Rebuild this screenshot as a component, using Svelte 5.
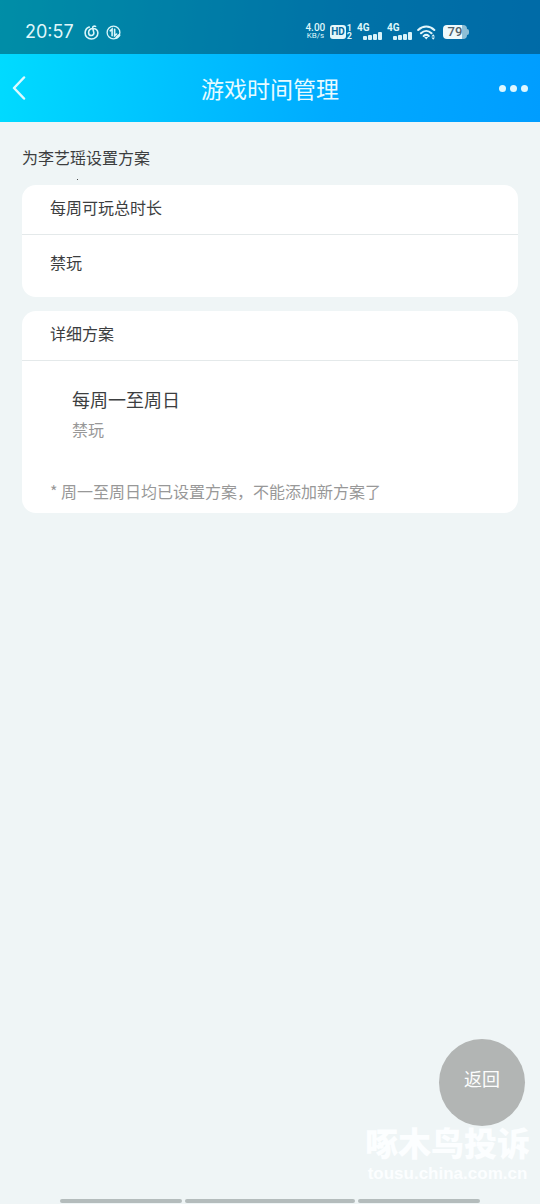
<script>
  const user = '李艺瑶';
  const total = '禁玩';
  const plans = [{ days: '每周一至周日', rule: '禁玩' }];
  const signals = ['4G', '4G'];
</script>

<div class="screen">
  <div class="top">
    <div class="status">
      <div class="left">
        <span class="clock">20:57</span>
        <svg class="ico" viewBox="0 0 16 16" fill="none" stroke="#d9f6fa" stroke-width="1.7" stroke-linecap="round">
          <path d="M5.600 2.200C3 3.200 1.200 5.600 1.200 8.500c0 3.700 2.900 6.400 6.700 6.400s6.900-2.800 6.900-6.300c0-3-2.300-4.900-5.300-4.900-2.700 0-4.600 1.800-4.600 4.200 0 1.900 1.300 3.300 3 3.300 1.800 0 2.900-1.500 2.500-3.300L9.300 3.400C9 1.700 10.500.6 12.300 1.500" />
        </svg>
        <svg class="ico" viewBox="0 0 16 16" fill="none" stroke="#d9f6fa" stroke-width="1.4" stroke-linecap="round">
          <circle cx="8" cy="8" r="6.800" />
          <path d="M4.500 6.200 6.500 4.300V11.500M9.200 4.500V11.500L11.300 9.600" stroke-width="1.700" />
          <path d="M11.300 13.300 14 11" stroke-width="2.800" />
        </svg>
      </div>
      <div class="right">
        <div class="speed"><b>4.00</b><span>KB/s</span></div>
        <div class="volte">
          <span class="hd">HD</span>
          <span class="sims"><b>1</b><b>2</b></span>
        </div>
        {#each signals as label}
          <div class="signal">
            <b>{label}</b>
            <svg viewBox="0 0 19 8" fill="#d9f3fa">
              <rect x="0" y="4" width="4" height="4" rx="1" />
              <rect x="5" y="3" width="4" height="5" rx="1" />
              <rect x="10" y="2" width="4" height="6" rx="1" />
              <rect x="15" y="0" width="4" height="8" rx="1" />
            </svg>
          </div>
        {/each}
        <svg class="wifi" viewBox="0 0 19 15" fill="none" stroke="#e2f6fb" stroke-width="2.100" stroke-linecap="round">
          <path d="M1.200 5C6 .4 12.500.4 17.300 5M4 8.200c3.200-3 7.300-3 10.500 0M6.700 11c1.600-1.400 3.500-1.400 5 0" />
          <path d="M7.200 12h4L9.200 14.500z" fill="#e2f6fb" stroke="none" />
          <path d="M14.400 11.400 16.200 9.200l1.800 2.200zM14.400 12.600h3.600l-1.800 2.200z" fill="#e2f6fb" stroke="none" />
        </svg>
        <div class="battery"><span>79</span></div>
      </div>
    </div>
    <header>
      <button class="back" aria-label="返回上一页">
        <svg viewBox="0 0 14 24" fill="none" stroke="#dcfaff" stroke-width="2.500" stroke-linecap="round" stroke-linejoin="round">
          <path d="M12 1.500 2 12l10 10.500" />
        </svg>
      </button>
      <h1>游戏时间管理</h1>
      <button class="more" aria-label="更多">
        <i></i><i></i><i></i>
      </button>
    </header>
  </div>

  <main>
    <p class="intro">为{user}设置方案</p>
    <div class="speck"></div>

    <section class="card">
      <h2>每周可玩总时长</h2>
      <p class="total">{total}</p>
    </section>

    <section class="card">
      <h2>详细方案</h2>
      {#each plans as plan}
        <div class="plan">
          <h3>{plan.days}</h3>
          <p>{plan.rule}</p>
        </div>
      {/each}
      <p class="hint">* 周一至周日均已设置方案，不能添加新方案了</p>
    </section>
  </main>

  <button class="return">返回</button>
  <div class="mark">
    <strong>啄木鸟投诉</strong>
    <span>tousu.china.com.cn</span>
  </div>
  <div class="navline"><i></i><i></i><i></i></div>
</div>

<style>
  :global(body) {
    background: #eff5f6;
  }
  .screen {
    position: relative;
    display: flex;
    flex-direction: column;
    min-height: 100vh;
    overflow: hidden;
    color: #3c3e3f;
    background: #eff5f6;
    font-family: 'Noto Sans CJK SC', sans-serif;
  }
  h1, h2, h3, p {
    margin: 0;
    font-weight: 400;
  }
  button {
    padding: 0;
    border: 0;
    background: none;
    font-family: inherit;
  }
  svg {
    display: block;
  }
  .top {
    background: linear-gradient(97deg, #00dcff 0%, #00c2ff 32%, #00abff 62%, #009dff 100%);
  }
  .status {
    display: flex;
    align-items: center;
    justify-content: space-between;
    height: 54px;
    padding: 10px 73px 0 25px;
    box-sizing: border-box;
    background: rgba(0, 40, 50, 0.43);
    color: #dff6fa;
    font-family: Roboto, sans-serif;
  }
  .left, .right {
    display: flex;
    align-items: center;
  }
  .left {
    gap: 7px;
  }
  .clock {
    margin-right: 3px;
    font-family: Inter, sans-serif;
    font-size: 18px;
    line-height: 22px;
  }
  .ico {
    width: 15px;
    height: 15px;
  }
  .right {
    gap: 5px;
  }
  .speed {
    display: flex;
    flex-direction: column;
    align-items: center;
    font-size: 8px;
    line-height: 8px;
  }
  .speed b {
    font-size: 10px;
    font-weight: 500;
  }
  .volte {
    display: flex;
    align-items: center;
    gap: 1px;
  }
  .hd {
    padding: 0 1px;
    border-radius: 3px;
    background: #e4f7fa;
    color: #00679a;
    font-size: 10px;
    font-weight: 700;
    line-height: 14px;
  }
  .sims {
    display: flex;
    flex-direction: column;
    font-size: 9px;
    line-height: 8px;
  }
  .signal {
    display: flex;
    flex-direction: column;
    width: 25px;
  }
  .signal b {
    font-size: 10px;
    line-height: 8px;
  }
  .signal svg {
    align-self: flex-end;
    width: 19px;
    height: 8px;
  }
  .wifi {
    width: 19px;
    height: 15px;
  }
  .battery {
    position: relative;
    width: 24px;
    margin-left: 2px;
    border-radius: 4px;
    background: linear-gradient(90deg, #eefafc 79%, #8fbfd6 79%);
    color: #52616a;
    font-size: 13px;
    font-weight: 500;
    line-height: 14px;
    text-align: center;
  }
  .battery::after {
    content: '';
    position: absolute;
    top: 4px;
    right: -2px;
    width: 2px;
    height: 6px;
    border-radius: 0 2px 2px 0;
    background: #8fbfd6;
  }
  header {
    display: grid;
    grid-template-columns: 60px 1fr 60px;
    align-items: center;
    height: 68px;
    padding: 0 12px;
    color: #e8fbff;
  }
  .back svg {
    width: 14px;
    height: 24px;
  }
  h1 {
    font-size: 23px;
    line-height: 32px;
    text-align: center;
  }
  .more {
    display: flex;
    justify-content: flex-end;
    gap: 4px;
  }
  .more i {
    width: 7px;
    height: 7px;
    border-radius: 50%;
    background: #dcf7ff;
  }
  main {
    flex: 1;
    padding: 23px 22px;
  }
  .intro {
    font-size: 16px;
    line-height: 24px;
  }
  .speck {
    width: 1px;
    height: 1px;
    margin: 10px 0 5px 55px;
    background: #4a4c4d;
  }
  .card {
    margin-bottom: 14px;
    border-radius: 14px;
    background: #fff;
  }
  h2 {
    padding: 10px 28px 15px;
    border-bottom: 1px solid #e4e9ea;
    font-size: 16px;
    line-height: 24px;
  }
  .total {
    padding: 15px 28px 23px;
    font-size: 16px;
    line-height: 24px;
  }
  .plan {
    padding: 24px 50px 0;
  }
  h3 {
    font-size: 18px;
    line-height: 28px;
  }
  .plan p {
    margin-top: 4px;
    color: #989898;
    font-size: 16px;
    line-height: 24px;
  }
  .hint {
    padding: 38px 28px 10px;
    color: #989898;
    font-size: 16px;
    line-height: 24px;
  }
  .return {
    position: absolute;
    right: 15px;
    bottom: 78px;
    width: 86px;
    height: 87px;
    padding-bottom: 10px;
    border-radius: 50%;
    background: #b2b5b4;
    color: #fcfdfd;
    font-size: 18px;
  }
  .mark {
    position: absolute;
    right: 10px;
    bottom: 19px;
    display: flex;
    flex-direction: column;
    align-items: center;
    color: #fcfeff;
  }
  .mark strong {
    font-size: 33px;
    font-weight: 900;
    line-height: 42px;
  }
  .mark span {
    font-family: 'Liberation Sans', sans-serif;
    font-size: 17px;
    font-weight: 700;
    line-height: 22px;
  }
  .navline {
    display: grid;
    grid-template-columns: 122fr 170fr 122fr;
    gap: 3px;
    padding: 0 60px 1px;
  }
  .navline i {
    height: 4px;
    border-radius: 2px;
    background: #b4bcbc;
  }
</style>
